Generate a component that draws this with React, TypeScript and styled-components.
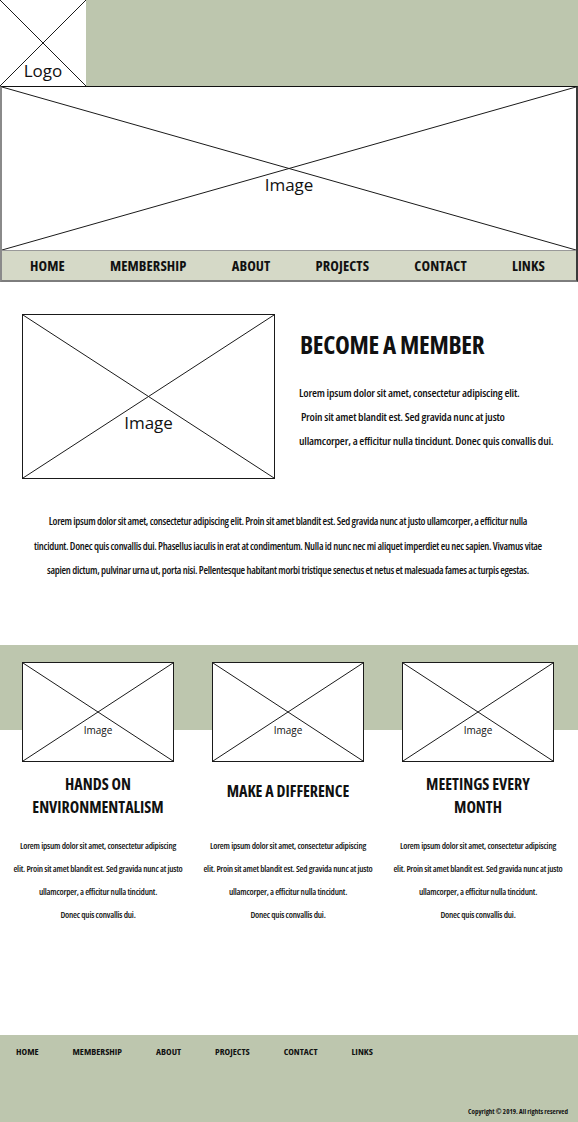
import React from "react";
import styled, { createGlobalStyle } from "styled-components";

const GREEN = "#bdc6ae";
const NAVBG = "#d5d9c7";
const COND = `"Open Sans", "DejaVu Sans Condensed", sans-serif`;

const Global = createGlobalStyle`
  html, body { margin: 0; padding: 0; background: #fff; }
  body { font-family: ${COND}; font-stretch: 75%; color: #111; }
  * { box-sizing: border-box; }
`;

const Page = styled.div`
  width: 578px;
  display: flex;
  flex-direction: column;
`;

/* ---------- placeholder ---------- */
const Frame = styled.div<{ $w: string; $h: number; $border: boolean }>`
  display: grid;
  flex-shrink: 0;
  width: ${(p) => p.$w};
  height: ${(p) => p.$h}px;
  background: #fff;
  border: ${(p) => (p.$border ? "1px solid #1a1a1a" : "none")};
  & > * { grid-area: 1 / 1; }
`;
const Cross = styled.svg`
  width: 100%;
  height: 100%;
  display: block;
`;
const FrameLabel = styled.span<{ $top: number; $size: number }>`
  align-self: start;
  justify-self: center;
  margin-top: ${(p) => p.$top}px;
  font-family: "Open Sans", "Liberation Sans", sans-serif;
  font-stretch: 100%;
  font-size: ${(p) => p.$size}px;
  line-height: 1;
  color: #111;
`;

function Placeholder({ w, h, label, top, size, border = true }: { w: string; h: number; label: string; top: number; size: number; border?: boolean }) {
  return (
    <Frame $w={w} $h={h} $border={border}>
      <Cross>
        <line x1="0" y1="0" x2="100%" y2="100%" stroke="#1a1a1a" strokeWidth="1" />
        <line x1="100%" y1="0" x2="0" y2="100%" stroke="#1a1a1a" strokeWidth="1" />
      </Cross>
      <FrameLabel $top={top} $size={size}>{label}</FrameLabel>
    </Frame>
  );
}

/* ---------- header ---------- */
const Header = styled.header`
  display: flex;
  height: 86px;
`;
const GreenFill = styled.div`
  flex: 1;
  background: ${GREEN};
`;

const HeroWrap = styled.div`
  border-left: 2px solid #8a8a8a;
  border-right: 2px solid #3a3a3a;
  border-bottom: 2px solid #7d7d7d;
  border-top: 1px solid #111;
  display: flex;
  flex-direction: column;
`;

const TopNav = styled.nav`
  display: flex;
  justify-content: space-between;
  align-items: center;
  height: 30px;
  padding: 0 31px 0 28px;
  background: ${NAVBG};
  border-top: 1px solid #999;
`;
const TopNavItem = styled.a`
  font-family: ${COND};
  font-stretch: 75%;
  font-weight: 700;
  font-size: 14.5px;
  letter-spacing: 0.1px;
  color: #111;
  text-decoration: none;
`;

/* ---------- member ---------- */
const Member = styled.section`
  display: flex;
  align-items: flex-start;
  padding: 32px 0 0 22px;
  gap: 24px;
`;
const MemberText = styled.div`
  display: flex;
  flex-direction: column;
  padding-top: 15px;
`;
const BigTitle = styled.h1`
  margin: 0 0 0 1px;
  font-family: ${COND};
  font-stretch: 75%;
  font-weight: 700;
  font-size: 25px;
  line-height: 30px;
  letter-spacing: -0.3px;
  color: #111;
`;
const Lines = styled.p<{ $size: number; $lh: number; $align: string; $ls: number }>`
  margin: 0;
  font-family: ${COND};
  font-stretch: 75%;
  font-weight: 600;
  font-size: ${(p) => p.$size}px;
  line-height: ${(p) => p.$lh}px;
  letter-spacing: ${(p) => p.$ls}px;
  text-align: ${(p) => p.$align};
  white-space: pre;
  color: #111;
`;
const MemberLines = styled(Lines)`
  margin-top: 22px;
`;
const Intro = styled(Lines)`
  margin-top: 30px;
  padding-right: 2px;
`;

/* ---------- cards ---------- */
const CardsBand = styled.section`
  margin-top: 62px;
  padding: 17px 5px 0 3px;
  background: linear-gradient(${GREEN} 0 85px, #fff 85px);
  display: grid;
  grid-template-columns: repeat(3, minmax(0, 1fr));
`;
const Card = styled.article`
  display: flex;
  flex-direction: column;
  align-items: center;
`;
const CardTitle = styled.h2<{ $offset: number }>`
  margin: 11px 0 0;
  height: 46px;
  padding-top: ${(p) => p.$offset}px;
  font-family: ${COND};
  font-stretch: 75%;
  font-weight: 700;
  font-size: 16px;
  line-height: 23px;
  letter-spacing: 0;
  text-align: center;
  color: #111;
`;
const CardLines = styled(Lines)`
  margin-top: 15px;
`;

/* ---------- footer ---------- */
const Footer = styled.footer`
  margin-top: 109px;
  height: 87px;
  background: ${GREEN};
  display: flex;
  flex-direction: column;
  justify-content: space-between;
  padding: 10px 10px 6px 16px;
`;
const FootNav = styled.nav`
  display: flex;
  gap: 34px;
`;
const FootItem = styled.a`
  font-family: ${COND};
  font-stretch: 75%;
  font-weight: 700;
  font-size: 9.5px;
  color: #111;
  text-decoration: none;
`;
const Copy = styled.small`
  align-self: flex-end;
  font-family: "Open Sans", "Liberation Sans", sans-serif;
  font-stretch: 87.5%;
  font-weight: 700;
  font-size: 7px;
  line-height: 9px;
  color: #111;
`;

const NAV = ["HOME", "MEMBERSHIP", "ABOUT", "PROJECTS", "CONTACT", "LINKS"];

const CARD_TEXT = [
  "Lorem ipsum dolor sit amet, consectetur adipiscing",
  "elit. Proin sit amet blandit est. Sed gravida nunc at justo",
  "ullamcorper, a efficitur nulla tincidunt.",
  "Donec quis convallis dui.",
].join("\n");

const CARDS = [
  { title: ["HANDS ON", "ENVIRONMENTALISM"], offset: 0 },
  { title: ["MAKE A DIFFERENCE"], offset: 7 },
  { title: ["MEETINGS EVERY", "MONTH"], offset: 0 },
];

export default function App() {
  return (
    <Page>
      <Global />
      <Header>
        <Placeholder w="86px" h={86} label="Logo" top={62} size={17} border={false} />
        <GreenFill />
      </Header>
      <HeroWrap>
        <Placeholder w="100%" h={163} label="Image" top={89} size={17} border={false} />
        <TopNav>
          {NAV.map((n) => (
            <TopNavItem key={n}>{n}</TopNavItem>
          ))}
        </TopNav>
      </HeroWrap>

      <Member>
        <Placeholder w="253px" h={165} label="Image" top={99} size={17} />
        <MemberText>
          <BigTitle>BECOME A MEMBER</BigTitle>
          <MemberLines $size={11.5} $lh={24} $align="left" $ls={-0.2}>
            {"Lorem ipsum dolor sit amet, consectetur adipiscing elit.\n Proin sit amet blandit est. Sed gravida nunc at justo\nullamcorper, a efficitur nulla tincidunt. Donec quis convallis dui."}
          </MemberLines>
        </MemberText>
      </Member>

      <Intro $size={10.5} $lh={24.5} $align="center" $ls={-0.3}>
        {"Lorem ipsum dolor sit amet, consectetur adipiscing elit. Proin sit amet blandit est. Sed gravida nunc at justo ullamcorper, a efficitur nulla\ntincidunt. Donec quis convallis dui. Phasellus iaculis in erat at condimentum. Nulla id nunc nec mi aliquet imperdiet eu nec sapien. Vivamus vitae\nsapien dictum, pulvinar urna ut, porta nisi. Pellentesque habitant morbi tristique senectus et netus et malesuada fames ac turpis egestas."}
      </Intro>

      <CardsBand>
        {CARDS.map((c, i) => (
          <Card key={i}>
            <Placeholder w="152px" h={100} label="Image" top={62} size={10} />
            <CardTitle $offset={c.offset}>
              {c.title.map((t, j) => (
                <React.Fragment key={j}>
                  {t}
                  {j < c.title.length - 1 && <br />}
                </React.Fragment>
              ))}
            </CardTitle>
            <CardLines $size={9} $lh={23} $align="center" $ls={-0.22}>
              {CARD_TEXT}
            </CardLines>
          </Card>
        ))}
      </CardsBand>

      <Footer>
        <FootNav>
          {NAV.map((n) => (
            <FootItem key={n}>{n}</FootItem>
          ))}
        </FootNav>
        <Copy>Copyright © 2019. All rights reserved</Copy>
      </Footer>
    </Page>
  );
}
